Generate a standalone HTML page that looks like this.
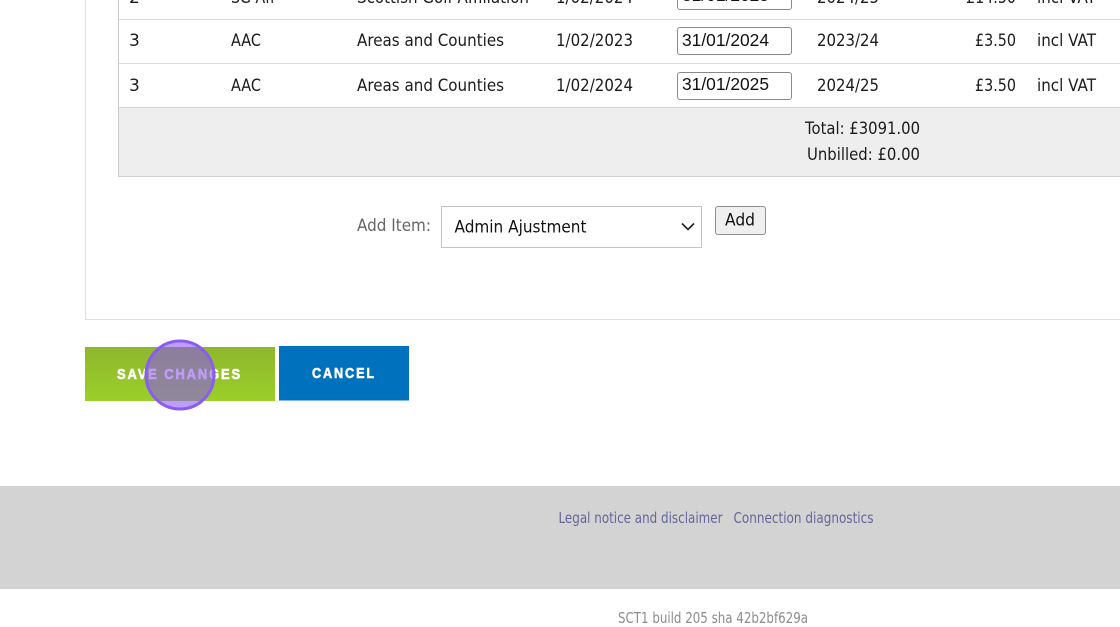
<!DOCTYPE html>
<html><head><meta charset="utf-8"><style>
html,body{margin:0;padding:0;background:#fff;width:1120px;height:627px;overflow:hidden}
svg{display:block}
text{font-family:"DejaVu Sans","Liberation Sans",sans-serif;font-size:17px;fill:#1c1c1c}
.a{font-family:"Liberation Sans",sans-serif;font-size:17.5px;fill:#111}
.b{font-family:"Liberation Sans",sans-serif;font-weight:bold;font-size:15px;letter-spacing:2.2px;fill:#fff;stroke:#fff;stroke-width:.6px}
</style></head><body>
<svg width="1120" height="627" viewBox="0 0 1120 627" xmlns="http://www.w3.org/2000/svg">
<defs><linearGradient id="g" x1="0" y1="0" x2="0" y2="1"><stop offset="0" stop-color="#8fb62c"/><stop offset="1" stop-color="#9ad02a"/></linearGradient></defs>
<rect width="1120" height="627" fill="#fff"/>
<rect x="85" y="0" width="1" height="320" fill="#dfdfdf"/>
<rect x="85" y="319" width="1035" height="1" fill="#dfdfdf"/>
<rect x="118" y="0" width="1" height="177" fill="#cccccc"/>
<rect x="119" y="108" width="1001" height="68" fill="#eeeeee"/>
<rect x="119" y="19" width="1001" height="1" fill="#dddddd"/>
<rect x="119" y="63" width="1001" height="1" fill="#dddddd"/>
<rect x="119" y="107" width="1001" height="1" fill="#d4d4d4"/>
<rect x="118" y="176" width="1002" height="1" fill="#cfcfcf"/>

<text x="129" y="3">2</text>
<text x="231" y="3" textLength="44" lengthAdjust="spacingAndGlyphs">SG Aff</text>
<text x="357" y="3" textLength="172" lengthAdjust="spacingAndGlyphs">Scottish Golf Affiliation</text>
<text x="556" y="3" textLength="77" lengthAdjust="spacingAndGlyphs">1/02/2024</text>
<rect x="677.5" y="-17.5" width="114" height="27" rx="2.5" fill="#fff" stroke="#8a8a8a"/>
<text class="a" x="682" y="1" textLength="87" lengthAdjust="spacingAndGlyphs">31/01/2025</text>
<text x="817" y="3" textLength="62" lengthAdjust="spacingAndGlyphs">2024/25</text>
<text x="966" y="3" textLength="50" lengthAdjust="spacingAndGlyphs">£14.50</text>
<text x="1037" y="3" textLength="59" lengthAdjust="spacingAndGlyphs">incl VAT</text>

<text x="129" y="46">3</text>
<text x="231" y="46" textLength="30" lengthAdjust="spacingAndGlyphs">AAC</text>
<text x="357" y="46" textLength="147" lengthAdjust="spacingAndGlyphs">Areas and Counties</text>
<text x="556" y="46" textLength="77" lengthAdjust="spacingAndGlyphs">1/02/2023</text>
<rect x="677.5" y="27.5" width="114" height="27" rx="2.5" fill="#fff" stroke="#8a8a8a"/>
<text class="a" x="682" y="46" textLength="87" lengthAdjust="spacingAndGlyphs">31/01/2024</text>
<text x="817" y="46" textLength="62" lengthAdjust="spacingAndGlyphs">2023/24</text>
<text x="975" y="46" textLength="41" lengthAdjust="spacingAndGlyphs">£3.50</text>
<text x="1037" y="46" textLength="59" lengthAdjust="spacingAndGlyphs">incl VAT</text>

<text x="129" y="91">3</text>
<text x="231" y="91" textLength="30" lengthAdjust="spacingAndGlyphs">AAC</text>
<text x="357" y="91" textLength="147" lengthAdjust="spacingAndGlyphs">Areas and Counties</text>
<text x="556" y="91" textLength="77" lengthAdjust="spacingAndGlyphs">1/02/2024</text>
<rect x="677.5" y="72.5" width="114" height="27" rx="2.5" fill="#fff" stroke="#8a8a8a"/>
<text class="a" x="682" y="90" textLength="87" lengthAdjust="spacingAndGlyphs">31/01/2025</text>
<text x="817" y="91" textLength="62" lengthAdjust="spacingAndGlyphs">2024/25</text>
<text x="975" y="91" textLength="41" lengthAdjust="spacingAndGlyphs">£3.50</text>
<text x="1037" y="91" textLength="59" lengthAdjust="spacingAndGlyphs">incl VAT</text>

<text x="805" y="134" textLength="115" lengthAdjust="spacingAndGlyphs">Total: £3091.00</text>
<text x="807" y="160" textLength="113" lengthAdjust="spacingAndGlyphs">Unbilled: £0.00</text>

<text x="357" y="231" textLength="74" lengthAdjust="spacingAndGlyphs" style="fill:#666">Add Item:</text>
<rect x="441.5" y="206.5" width="260" height="41" fill="#fff" stroke="#c4c4c4"/>
<text x="454.5" y="232.5" textLength="132" lengthAdjust="spacingAndGlyphs" style="fill:#111">Admin Ajustment</text>
<path d="M682 223.5l6 6 6-6" fill="none" stroke="#222" stroke-width="1.6"/>
<rect x="715.5" y="206.5" width="50" height="28" rx="2.5" fill="#efefef" stroke="#8f8f8f"/>
<text x="725" y="225.5" textLength="30" lengthAdjust="spacingAndGlyphs" style="fill:#111">Add</text>

<rect x="85" y="347" width="190" height="54" fill="url(#g)"/>
<rect x="279" y="346" width="130" height="54.5" fill="#0071bc"/>
<text class="b" x="117" y="379" textLength="125" lengthAdjust="spacingAndGlyphs">SAVE CHANGES</text>
<text class="b" x="312" y="378" textLength="64" lengthAdjust="spacingAndGlyphs">CANCEL</text>
<circle cx="180" cy="375" r="34" fill="#8a50f5" fill-opacity=".56" stroke="#8b5cf0" stroke-width="3"/>

<rect x="0" y="486" width="1120" height="103" fill="#d3d3d3"/>
<text x="558.5" y="523" textLength="164" lengthAdjust="spacingAndGlyphs" style="font-size:15px;fill:#66669a">Legal notice and disclaimer</text>
<text x="733.5" y="523" textLength="140" lengthAdjust="spacingAndGlyphs" style="font-size:15px;fill:#66669a">Connection diagnostics</text>
<text x="618" y="623" textLength="190" lengthAdjust="spacingAndGlyphs" style="font-size:15px;fill:#8c8c8c">SCT1 build 205 sha 42b2bf629a</text>
</svg>
</body></html>
